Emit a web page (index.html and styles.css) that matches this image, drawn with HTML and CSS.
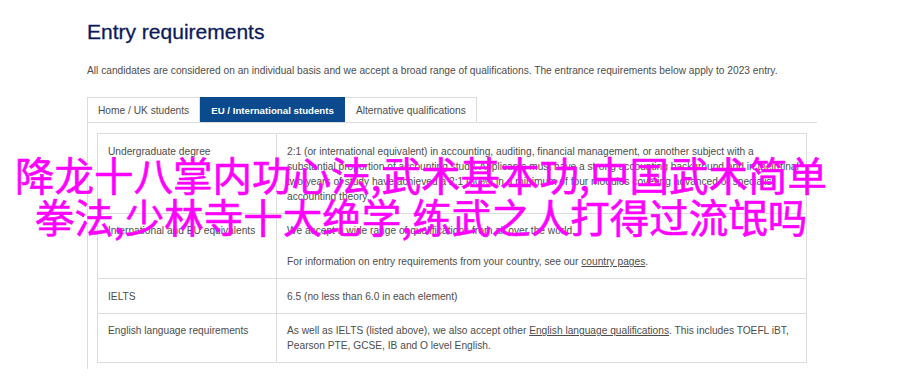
FILE: index.html
```html
<!DOCTYPE html>
<html lang="en">
<head>
    <meta charset="UTF-8">
    <meta name="viewport" content="width=device-width, initial-scale=1.0">
    <title>Entry requirements</title>
    <link rel="stylesheet" href="styles.css">
</head>
<body>
    <main class="page">
        <h1 class="title">Entry requirements</h1>
        <p class="intro">All candidates are considered on an individual basis and we accept a broad range of qualifications. The entrance requirements below apply to 2023 entry.</p>

        <div class="tabs">
            <ul class="tab-list">
                <li class="tab">Home / UK students</li>
                <li class="tab tab-active">EU / International students</li>
                <li class="tab">Alternative qualifications</li>
            </ul>
            <div class="tab-panel">
                <table class="req-table">
                    <tr>
                        <td class="req-name">Undergraduate degree</td>
                        <td class="req-value">2:1 (or international equivalent) in accounting, auditing, financial management, or another subject with a substantial proportion of accounting study. Applicants must have a strong accounting background and in their final two years of study have achieved a 2:1 (60%) in a minimum of four modules covering advanced or specialist accounting theory.</td>
                    </tr>
                    <tr>
                        <td class="req-name">International and EU equivalents</td>
                        <td class="req-value">
                            <p>We accept a wide range of qualifications from all over the world.</p>
                            <p>For information on entry requirements from your country, see our <a href="#">country pages</a>.</p>
                        </td>
                    </tr>
                    <tr>
                        <td class="req-name">IELTS</td>
                        <td class="req-value">6.5 (no less than 6.0 in each element)</td>
                    </tr>
                    <tr>
                        <td class="req-name">English language requirements</td>
                        <td class="req-value">As well as IELTS (listed above), we also accept other <a href="#">English language qualifications</a>. This includes TOEFL iBT, Pearson PTE, GCSE, IB and O level English.</td>
                    </tr>
                </table>
            </div>
        </div>
    </main>

    <!-- caption laid over the page -->
    <div class="overlay">降龙十八掌内功心法,武术基本功,中国武术简单<br>拳法,少林寺十大绝学,练武之人打得过流氓吗</div>
</body>
</html>
```

FILE: styles.css
```css
body {
    margin: 0;
    background: #fff;
    font-family: "Liberation Sans", Arial, sans-serif;
    color: #4d4d4d;
}
.page { padding: 20px 0 0 87px; }
.title { margin: 0; font-size: 21px; line-height: 24px; font-weight: normal; color: #0c1a5b; -webkit-text-stroke: 0.3px #0c1a5b; }
.intro { margin: 19px 0 0; font-size: 10.2px; line-height: 15px; }

.tabs { margin-top: 19px; width: 730px; }
.tab-list { list-style: none; margin: 0; padding: 0; display: flex; }
.tab { font-size: 10.2px; line-height: 15px; padding: 4.5px 10px 4.5px 10px; border: 1px solid #dcdcdc; border-bottom: 0; color: #4d4d4d; }
.tab + .tab { border-left: 0; }
.tab-active { background: #0b4a8c; border-color: #0b4a8c; color: #fff; font-weight: bold; font-size: 9.7px; padding-left: 11px; }
.tab-active + .tab { padding-left: 11px; }
.tab-panel { border-top: 1px solid #dcdcdc; border-left: 1px solid #dcdcdc; padding: 10px 9px 6px 9px; }

.req-table { width: 710px; border-collapse: collapse; border: 1px solid #dcdcdc; font-size: 10.2px; line-height: 15px; }
.req-table td { border: 1px solid #dcdcdc; padding: 9.5px 10px 9px; vertical-align: top; }
.req-name { width: 158px; }
.req-table .req-value { padding-right: 3px; }
.req-value p { margin: 0; }
.req-value p + p { margin-top: 16px; }
.req-value a { color: inherit; }

.overlay { position: absolute; top: 153px; left: 0; width: 842px; text-align: center; font-family: "Noto Sans CJK SC", sans-serif; font-size: 39.5px; line-height: 42px; color: #ff00ff; -webkit-text-stroke: 0.6px #ff00ff; }
```
